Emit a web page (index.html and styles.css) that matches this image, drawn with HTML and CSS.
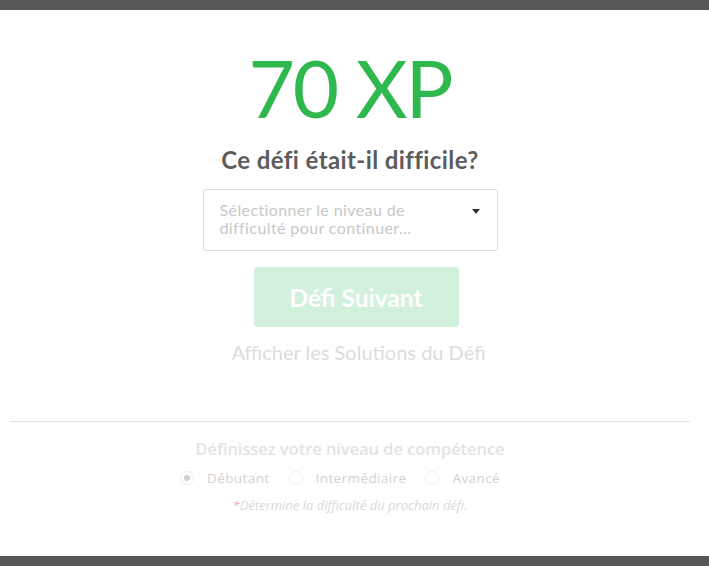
FILE: index.html
```html
<!DOCTYPE html>
<html lang="fr">
<head>
<meta charset="utf-8">
<title>Défi terminé</title>
<link rel="stylesheet" href="styles.css">
</head>
<body>
<div class="panel">
  <div class="content">
    <div class="xp">70 XP</div>
    <h2 class="question">Ce défi était-il difficile?</h2>
    <div class="select">
      <span class="placeholder">Sélectionner le niveau de<br>difficulté pour continuer...</span>
      <span class="caret"></span>
    </div>
    <button class="next">Défi Suivant</button>
    <div class="solutions">Afficher les Solutions du Défi</div>
    <hr class="divider">
    <div class="level-title">Définissez votre niveau de compétence</div>
    <div class="radios">
      <label class="radio"><span class="dot checked"></span><span>Débutant</span></label>
      <label class="radio"><span class="dot"></span><span>Intermédiaire</span></label>
      <label class="radio"><span class="dot"></span><span>Avancé</span></label>
    </div>
    <div class="note"><span class="star">*</span>Détermine la difficulté du prochain défi.</div>
  </div>
</div>
</body>
</html>
```
FILE: styles.css
```css
html, body {
  margin: 0;
  padding: 0;
}
body {
  background: #575757;
  height: 566px;
  overflow: hidden;
  font-family: Lato, "Open Sans", sans-serif;
}
.panel {
  margin-top: 10px;
  height: 546px;
  background: #fff;
}
.content {
  width: 700px;
  display: flex;
  flex-direction: column;
  align-items: center;
  padding-top: 37px;
}
.xp {
  font-family: Lato, sans-serif;
  font-weight: 400;
  font-size: 80px;
  line-height: 80px;
  color: #2fb84e;
  letter-spacing: -2px;
}
.question {
  margin: 19px 0 0;
  font-family: Lato, sans-serif;
  font-weight: 700;
  font-size: 24px;
  line-height: 28px;
  letter-spacing: 0.4px;
  color: #5c5c5c;
}
.select {
  margin-top: 15px;
  box-sizing: border-box;
  width: 295px;
  height: 62px;
  border: 1px solid #dcdcdc;
  border-radius: 3px;
  padding: 11px 16px 0 16px;
  display: flex;
  justify-content: space-between;
  align-items: flex-start;
}
.placeholder {
  font-family: Lato, sans-serif;
  font-size: 16px;
  line-height: 18px;
  letter-spacing: 0.4px;
  color: #c8c8c8;
}
.caret {
  margin-top: 8px;
  margin-right: 1px;
  width: 0;
  height: 0;
  border-left: 4.5px solid transparent;
  border-right: 4.5px solid transparent;
  border-top: 5px solid #333;
}
.next {
  margin-top: 16px;
  margin-left: 12px;
  width: 205px;
  height: 60px;
  border: none;
  border-radius: 4px;
  background: #d2f1dc;
  color: #fff;
  font-family: Lato, sans-serif;
  font-weight: 700;
  font-size: 24.5px;
  padding: 0;
}
.solutions {
  margin-top: 13px;
  margin-left: 17px;
  font-family: Lato, sans-serif;
  font-size: 20px;
  line-height: 24px;
  color: #dcdcdc;
}
.divider {
  align-self: stretch;
  margin: 57px 10px 0;
  border: none;
  border-top: 1px solid #e2e2e2;
  height: 0;
}
.level-title {
  margin-top: 16px;
  font-family: "Open Sans", sans-serif;
  font-weight: 600;
  font-size: 16.4px;
  line-height: 21px;
  color: #e3e3e3;
}
.radios {
  margin-top: 10px;
  margin-right: 20px;
  display: flex;
  gap: 19px;
}
.radio {
  display: flex;
  align-items: center;
  gap: 13px;
  font-family: "Open Sans", sans-serif;
  font-size: 13.5px;
  line-height: 18px;
  color: #d2d2d2;
  letter-spacing: 0.4px;
}
.dot {
  box-sizing: border-box;
  width: 14px;
  height: 14px;
  border-radius: 50%;
  border: 1px solid #ededed;
  display: flex;
  align-items: center;
  justify-content: center;
}
.dot.checked::after {
  content: "";
  width: 6px;
  height: 6px;
  border-radius: 50%;
  background: #cfcfcf;
}
.note {
  margin-top: 10px;
  font-family: "Open Sans", sans-serif;
  font-style: italic;
  font-size: 13px;
  line-height: 16px;
  color: #dadada;
}
.star {
  color: #f0aab0;
}
```
